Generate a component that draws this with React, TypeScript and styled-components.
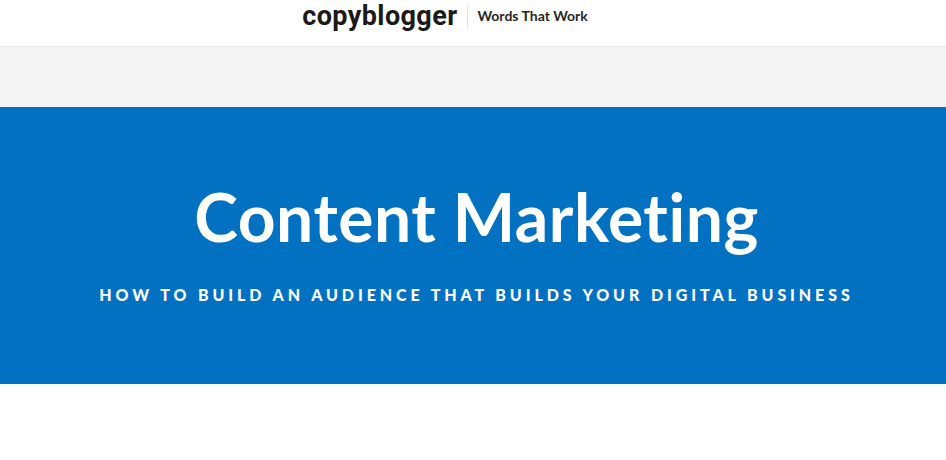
import React from "react";
import styled, { createGlobalStyle } from "styled-components";

const Global = createGlobalStyle`
  html, body { margin: 0; padding: 0; background: #ffffff; }
  body { font-family: "Lato", "Open Sans", sans-serif; -webkit-font-smoothing: antialiased; }
`;

const Header = styled.header`
  height: 46px;
  border-bottom: 1px solid #e6e6e6;
  display: flex;
  align-items: flex-start;
  justify-content: center;
  padding-right: 56px;
  background: #fff;
`;

const Brand = styled.div`
  display: flex;
  align-items: flex-start;
`;

const Logo = styled.div`
  font-family: "Roboto", sans-serif;
  font-weight: 700;
  font-size: 27px;
  letter-spacing: 0.4px;
  color: #1a1a1a;
  line-height: 32px;
`;

const Divider = styled.div`
  width: 1px;
  height: 24px;
  margin: 5px 9px 0 10px;
  background: #e2e2e2;
`;

const Tagline = styled.div`
  font-family: "Lato", sans-serif;
  font-weight: 700;
  font-size: 14px;
  color: #262626;
  line-height: 16px;
  padding-top: 8px;
`;

const Band = styled.div`
  height: 60px;
  background: #f5f5f5;
`;

const Hero = styled.section`
  height: 277px;
  background: #0271c1;
  display: flex;
  flex-direction: column;
  align-items: center;
  padding-left: 7px;
  color: #fff;
`;

const Title = styled.h1`
  margin: 70px 0 0;
  font-family: "Lato", sans-serif;
  font-weight: 700;
  font-size: 66px;
  line-height: 80px;
  letter-spacing: 0.5px;
`;

const Subtitle = styled.p`
  margin: 29px 0 0;
  font-family: "Lato", sans-serif;
  font-weight: 900;
  font-size: 16px;
  line-height: 18px;
  letter-spacing: 3.9px;
  text-transform: uppercase;
`;

export default function App() {
  return (
    <>
      <Global />
      <Header>
        <Brand>
          <Logo>copyblogger</Logo>
          <Divider />
          <Tagline>Words That Work</Tagline>
        </Brand>
      </Header>
      <Band />
      <Hero>
        <Title>Content Marketing</Title>
        <Subtitle>How to build an audience that builds your digital business</Subtitle>
      </Hero>
    </>
  );
}
